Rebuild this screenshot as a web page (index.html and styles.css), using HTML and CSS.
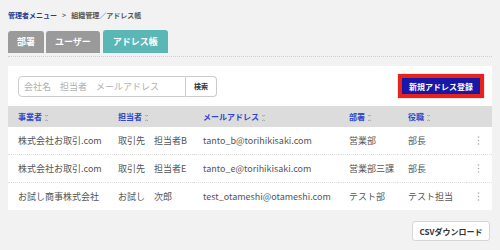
FILE: index.html
```html
<!DOCTYPE html>
<html lang="ja">
<head>
    <meta charset="UTF-8">
    <title>アドレス帳</title>
    <link rel="stylesheet" href="styles.css">
</head>
<body>
<div class="breadcrumb">
    <a href="#">管理者メニュー</a><span class="sep">&gt;</span><span>組織管理／アドレス帳</span>
</div>

<div class="tabs">
    <div class="tab">部署</div>
    <div class="tab">ユーザー</div>
    <div class="tab active">アドレス帳</div>
</div>

<div class="card">
    <div class="toolbar">
        <div class="search">
            <input type="text" placeholder="会社名　担当者　メールアドレス">
            <button type="button">検索</button>
        </div>
        <button type="button" class="btn-new">新規アドレス登録</button>
    </div>

    <table class="list">
        <colgroup>
            <col style="width: 100px">
            <col style="width: 85px">
            <col style="width: 146px">
            <col style="width: 59px">
            <col style="width: 69px">
            <col>
        </colgroup>
        <thead>
            <tr>
                <th>事業者<i class="sort"></i></th>
                <th>担当者<i class="sort"></i></th>
                <th>メールアドレス<i class="sort"></i></th>
                <th>部署<i class="sort"></i></th>
                <th>役職<i class="sort"></i></th>
                <th></th>
            </tr>
        </thead>
        <tbody id="rows"></tbody>
    </table>
</div>

<div class="footer">
    <button type="button" class="btn-csv">CSVダウンロード</button>
</div>

<script>
    const contacts = [
        { company: '株式会社お取引.com', person: '取引先　担当者B', mail: 'tanto_b@torihikisaki.com', dept: '営業部', title: '部長' },
        { company: '株式会社お取引.com', person: '取引先　担当者E', mail: 'tanto_e@torihikisaki.com', dept: '営業部三課', title: '部長' },
        { company: 'お試し商事株式会社', person: 'お試し　次郎', mail: 'test_otameshi@otameshi.com', dept: 'テスト部', title: 'テスト担当' }
    ];

    const kebab = '<svg width="3" height="9" viewBox="0 0 3 9"><circle cx="1.5" cy="1" r="0.8"/><circle cx="1.5" cy="4.5" r="0.8"/><circle cx="1.5" cy="8" r="0.8"/></svg>';

    document.getElementById('rows').innerHTML = contacts.map(c => `
        <tr>
            <td>${c.company}</td>
            <td>${c.person}</td>
            <td>${c.mail}</td>
            <td>${c.dept}</td>
            <td>${c.title}</td>
            <td class="menu">${kebab}</td>
        </tr>
    `).join('');
</script>
</body>
</html>
```

FILE: styles.css
```css
body {
    font-family: "Noto Sans CJK JP", "Noto Sans", sans-serif;
    margin: 0 8px;
    background: #f2f2f2;
    color: #444;
}
.breadcrumb {
    padding-top: 10px;
    height: 10px;
    line-height: 10px;
    font-size: 7px;
    font-weight: bold;
    color: #555;
}
.breadcrumb a {
    color: #2b3990;
    text-decoration: none;
}
.breadcrumb .sep {
    margin: 0 5px;
}
.tabs {
    display: flex;
    align-items: flex-end;
    gap: 2px;
    margin-top: 10px;
    padding-bottom: 3px;
    border-bottom: 1px dotted #cfcfcf;
}
.tab {
    height: 22px;
    line-height: 22px;
    padding: 0 9px;
    background: #9a9a9a;
    color: #fff;
    font-size: 9px;
    font-weight: bold;
    border-radius: 3px 3px 0 0;
}
.tab.active {
    height: 23px;
    line-height: 23px;
    margin-left: 1px;
    padding: 0 10px;
    background: #5bb6b6;
}
.card {
    margin-top: 9px;
    background: #fff;
}
.toolbar {
    display: flex;
    align-items: center;
    justify-content: space-between;
    height: 40px;
    padding: 0 8px 0 10px;
}
.search {
    display: flex;
}
.search input {
    box-sizing: border-box;
    width: 168px;
    height: 21px;
    margin: 0;
    padding: 0 5px;
    border: 1px solid #ccc;
    border-radius: 4px 0 0 4px;
    font-family: inherit;
    font-size: 9px;
    outline: none;
}
.search input::placeholder {
    color: #b0b0b0;
}
.search button {
    box-sizing: border-box;
    width: 31px;
    height: 21px;
    margin: 0;
    border: 1px solid #ccc;
    border-left: none;
    border-radius: 0 4px 4px 0;
    background: #fff;
    color: #333;
    font-family: inherit;
    font-size: 7px;
    font-weight: bold;
}
.btn-new {
    box-sizing: border-box;
    width: 86px;
    height: 24px;
    padding: 0;
    border: 4px solid #e8231b;
    box-shadow: 0 0 1px #f66;
    background: #1717a8;
    color: #fff;
    font-family: inherit;
    font-size: 8px;
    font-weight: bold;
}
.list {
    width: 100%;
    border-collapse: collapse;
    table-layout: fixed;
}
.list th {
    height: 21px;
    padding: 0 0 0 10px;
    background: #dcdcdc;
    color: #3346c8;
    font-size: 8px;
    font-weight: bold;
    text-align: left;
    white-space: nowrap;
}
.list .sort {
    display: inline-block;
    width: 3px;
    height: 6px;
    margin-left: 3px;
    vertical-align: -1px;
    background:
        linear-gradient(to top right, transparent 50%, #aaa 50%) 0 0 / 1.5px 2px no-repeat,
        linear-gradient(to top left, transparent 50%, #aaa 50%) 1.5px 0 / 1.5px 2px no-repeat,
        linear-gradient(to bottom right, transparent 50%, #aaa 50%) 0 4px / 1.5px 2px no-repeat,
        linear-gradient(to bottom left, transparent 50%, #aaa 50%) 1.5px 4px / 1.5px 2px no-repeat;
}
.list td {
    height: 27px;
    padding: 0 0 0 10px;
    font-size: 9px;
    color: #555;
    white-space: nowrap;
}
.list tbody tr {
    border-bottom: 1px dotted #dedede;
}
.list tbody tr:last-child {
    border-bottom: none;
}
.list td.menu svg {
    display: block;
    fill: #aaa;
}
.footer {
    display: flex;
    justify-content: flex-end;
    margin-top: 11px;
    padding-right: 2px;
}
.btn-csv {
    box-sizing: border-box;
    width: 78px;
    height: 20px;
    padding: 0;
    border: 1px solid #d6d6d6;
    border-radius: 3px;
    background: #fff;
    color: #333;
    font-family: inherit;
    font-size: 8px;
    font-weight: bold;
}
```
